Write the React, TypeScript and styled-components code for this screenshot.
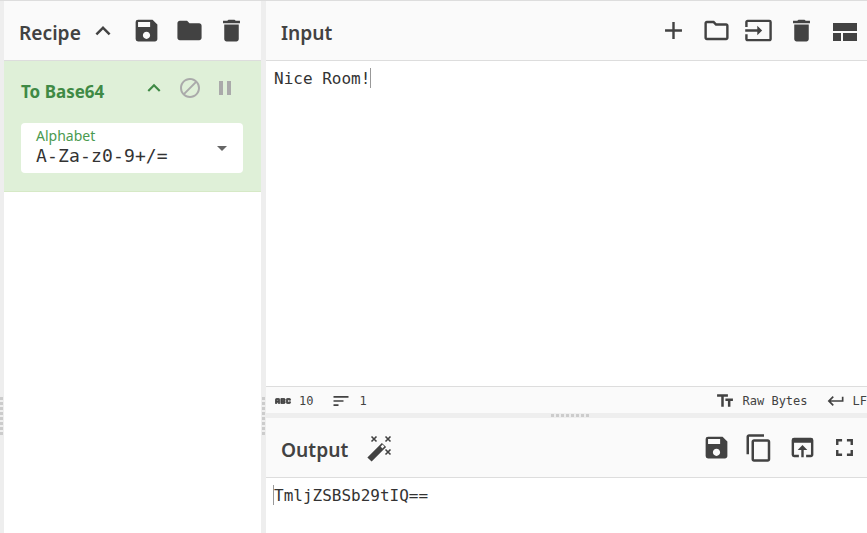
import React from 'react';
import styled, { createGlobalStyle } from 'styled-components';
import {
  MdSave, MdFolder, MdDelete, MdKeyboardArrowUp, MdBlock, MdPause, MdAdd, MdOutlineFolder, MdInput,
  MdContentCopy, MdOpenInBrowser, MdFullscreen, MdTextFields, MdKeyboardReturn,
  MdSort, MdAbc, MdArrowDropDown,
} from 'react-icons/md';

const Global = createGlobalStyle`
  html, body { margin: 0; padding: 0; background: #fff; }
  * { box-sizing: border-box; }
`;

const Page = styled.div`
  width: 867px; height: 533px; overflow: hidden; display: flex;
  background: #eee; border-top: 1px solid #ddd;
  font-family: "Noto Sans", "Open Sans", sans-serif; color: #424242;
`;
const VGutter = styled.div`
  width: ${p => p.$w}px; flex: none; background: #eee; display: flex; flex-direction: column; gap: 2px;
  padding: 396px 0 0 ${p => p.$pad}px;
`;
const Grip = styled.i`
  display: block; width: 3px; height: 3px; background: #ccc; flex: none;
`;
const RecipePane = styled.section`
  width: 257px; flex: none; background: #fff; display: flex; flex-direction: column;
`;
const Main = styled.main`
  flex: 1; min-width: 0; display: flex; flex-direction: column; background: #fff;
`;
const Header = styled.header`
  height: 60px; flex: none; background: #fafafa; border-bottom: 1px solid #ddd;
  display: flex; align-items: center; padding-left: 15px;
`;
const Title = styled.h2`
  margin: 0; font-size: 19.2px; font-weight: 600; line-height: 27px; color: #424242; position: relative; top: 2px;
`;
const Buttons = styled.div`
  display: flex; align-items: center; margin-left: auto; gap: 13.5px; padding-right: ${p => p.$right}px;
`;
const Op = styled.div`
  height: 131px; background: #dff0d8; border-bottom: 1px solid #d6e9c6;
  padding: 17px 18px 0 17px;
`;
const OpHead = styled.div`
  display: flex; align-items: center; height: 26px;
`;
const OpTitle = styled.div`
  font-size: 17px; font-weight: 700; color: #3f8a45; line-height: 24px; position: relative; top: 1px;
`;
const OpControls = styled.div`
  display: flex; align-items: center; margin-left: auto; gap: 11px; margin-right: 6px; position: relative; top: -3px;
`;
const Field = styled.div`
  margin-top: 19px; height: 50px; width: 222px; background: #fff; border-radius: 4px;
  padding: 4px 0 0 15px; position: relative;
`;
const FieldLabel = styled.div`
  font-size: 14px; line-height: 18px; color: #4a9a50;
`;
const FieldValue = styled.div`
  font-family: "DejaVu Sans Mono", monospace; font-size: 18px; line-height: 21px; color: #333; letter-spacing: 0.15px;
`;
const Caret = styled.span`
  position: absolute; right: 9px; top: 13px; color: #666; display: flex;
`;
const InputArea = styled.div`
  height: 325px; padding: 7px 8px; font-family: "DejaVu Sans Mono", monospace; font-size: 16px; line-height: 21px; color: #333;
`;
const OutputArea = styled(InputArea)`
  flex: 1; height: auto; padding-left: 7px;
`;
const TextCaret = styled.span`
  display: inline-block; width: 1px; height: 20px; background: #999; vertical-align: -4px;
`;
const Status = styled.div`
  height: 27px; flex: none; background: #fafafa; border-top: 1px solid #ddd;
  display: flex; align-items: center; white-space: nowrap;
  font-family: "DejaVu Sans Mono", monospace; font-size: 12px; color: #424242; padding: 1px 0 0 7px;
`;
const StatusItem = styled.span`
  display: flex; align-items: center; gap: ${p => p.$gap}px; margin-right: ${p => p.$right}px;
`;
const StatusRight = styled.div`
  margin-left: auto; display: flex; align-items: center;
`;
const HGutter = styled.div`
  height: 5px; flex: none; background: #eee; display: flex; justify-content: center; align-items: center; gap: 2px; padding-left: 7px;
`;
const Wand = styled.svg`
  width: 28px; height: 28px; margin-left: 18px; flex: none; position: relative; top: 1px;
`;
const LayoutIcon = styled.svg`
  width: 25px; height: 18px; margin-left: 4px; flex: none; position: relative; top: 1px;
`;
const AbcIcon = styled(MdAbc)`
  path:not([fill="none"]) { stroke: currentColor; stroke-width: 1; }
`;

const grips = Array.from({ length: 8 });

export default function App() {
  return (
    <Page>
      <Global />
      <VGutter $w={4} $pad={0}>{grips.map((_, i) => <Grip key={i} />)}</VGutter>
      <RecipePane>
        <Header>
          <Title>Recipe</Title>
          <MdKeyboardArrowUp size={30} style={{ marginLeft: 7 }} />
          <Buttons $right={15}>
            <MdSave size={29} /><MdFolder size={29} /><MdDelete size={29} />
          </Buttons>
        </Header>
        <Op>
          <OpHead>
            <OpTitle>To Base64</OpTitle>
            <OpControls>
              <MdKeyboardArrowUp size={26} color="#3f8a45" />
              <MdBlock size={24} color="#aaa" />
              <MdPause size={24} color="#aaa" />
            </OpControls>
          </OpHead>
          <Field>
            <FieldLabel>Alphabet</FieldLabel>
            <FieldValue>A-Za-z0-9+/=</FieldValue>
            <Caret><MdArrowDropDown size={24} /></Caret>
          </Field>
        </Op>
      </RecipePane>
      <VGutter $w={5} $pad={1}>{grips.map((_, i) => <Grip key={i} />)}</VGutter>
      <Main>
        <Header>
          <Title>Input</Title>
          <Buttons $right={9}>
            <MdAdd size={29} /><MdOutlineFolder size={29} /><MdInput size={29} /><MdDelete size={29} />
            <LayoutIcon viewBox="0 0 25 18" fill="currentColor">
              <rect x="0" y="0" width="24" height="8" />
              <rect x="0" y="10" width="8" height="8" />
              <rect x="10" y="10" width="14" height="8" />
            </LayoutIcon>
          </Buttons>
        </Header>
        <InputArea>Nice Room!<TextCaret /></InputArea>
        <Status>
          <StatusItem $gap={6} $right={18}><AbcIcon size={20} />10</StatusItem>
          <StatusItem $gap={8} $right={0}><MdSort size={20} />1</StatusItem>
          <StatusRight>
            <StatusItem $gap={8} $right={18}><MdTextFields size={20} />Raw Bytes</StatusItem>
            <StatusItem $gap={7} $right={0}><MdKeyboardReturn size={20} />LF</StatusItem>
          </StatusRight>
        </Status>
        <HGutter>{grips.map((_, i) => <Grip key={i} />)}</HGutter>
        <Header>
          <Title>Output</Title>
          <Wand viewBox="0 0 28 28">
            <line x1="3.5" y1="24.5" x2="18" y2="10" stroke="#424242" strokeWidth="6" />
            <line x1="15.5" y1="12.5" x2="17.5" y2="10.5" stroke="#fafafa" strokeWidth="2.5" />
            <g stroke="#424242" strokeWidth="1.6">
              <path d="M5.5 1.5l5 5M10.5 1.5l-5 5" />
              <path d="M19.5 1.5l5 5M24.5 1.5l-5 5" />
              <path d="M19.5 14.5l5 5M24.5 14.5l-5 5" />
            </g>
          </Wand>
          <Buttons $right={8}>
            <MdSave size={29} /><MdContentCopy size={30} /><MdOpenInBrowser size={29} /><MdFullscreen size={29} />
          </Buttons>
        </Header>
        <OutputArea><TextCaret />TmljZSBSb29tIQ==</OutputArea>
      </Main>
    </Page>
  );
}
